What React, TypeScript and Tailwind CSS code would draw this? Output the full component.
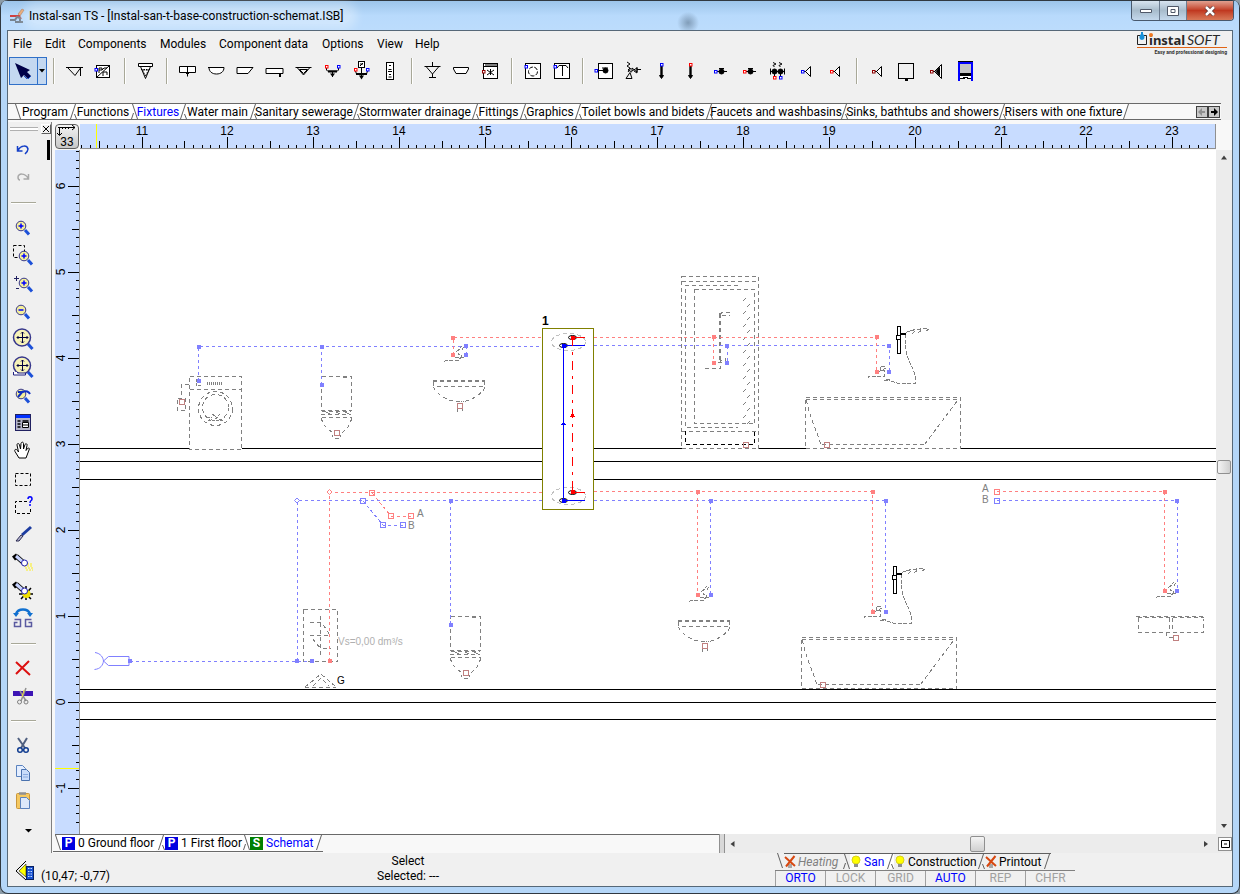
import { useLayoutEffect, useRef, useState } from 'react'
import type { ReactNode } from 'react'

const range = (n: number) => Array.from({ length: n }, (_, i) => i)

/* ---------- small drawing helpers ---------- */

function Port({ x, y, c }: { x: number; y: number; c: string }) {
  return <rect x={x - 1} y={y - 1} width="2.5" height="2.5" fill="#fff" stroke={c} />
}

function ToolIcon({ children }: { children: ReactNode }) {
  return (
    <svg width="29" height="28" viewBox="0 0 29 28" fill="none" stroke="#000" strokeWidth="1" aria-hidden="true">
      {children}
    </svg>
  )
}

type Tool = { name: string; icon: ReactNode } | null

const BLUE = '#0000ff'
const RED = '#ff0000'
const MAROON = '#900000'

const valve = (c: string) => (
  <>
    <path d="M11 14.5H22" />
    <circle cx="16.5" cy="14.5" r="2.5" fill="#000" />
    <path d="M14 11.5h5M16.5 11v3" />
    <Port x={10.5} y={14.5} c={c} />
  </>
)

const outlet = (c: string) => (
  <>
    <path d="M11 14.5h3M18.5 9.5v10l-5-5z" fill="#fff" />
    <Port x={10.5} y={14.5} c={c} />
  </>
)

const arrowDown = (c: string) => (
  <>
    <path d="M14.5 9v11" strokeWidth="2.4" />
    <path d="M12.5 18.5h4l-2 3z" fill="#000" />
    <Port x={14.5} y={7.5} c={c} />
  </>
)

const tools: Tool[] = [
  { name: 'Funnel', icon: <path d="M6 10.5h17M8 11l7 7.5 5.5-7.5M20.5 11v8" /> },
  {
    name: 'Pump',
    icon: (
      <>
        <rect x="7.5" y="8.5" width="13" height="12" fill="#fff" />
        <path d="M8 20L20 9M10 16v-5h3v2h-3M15 11h3M14 19v-4h4v3M13 13l2-2" />
        <Port x={7} y={12.5} c={BLUE} />
      </>
    ),
  },
  null,
  {
    name: 'Floor drain',
    icon: (
      <>
        <path d="M7.5 6.5h14v3h-14zM9.5 9.5l5 12 5-12z" fill="#fff" />
        <path d="M10 12.5h9M14.5 19l-3-6h6z" strokeDasharray="1.5 1" />
      </>
    ),
  },
  null,
  { name: 'Sink', icon: <path d="M6.5 9.5h16v6h-16zM14.5 9.5v10M13 16.5h3" fill="#fff" /> },
  { name: 'Washbasin', icon: <path d="M6 10.5h16M7 10.5c0 4 3 6.5 7.500 6.5s7.500-2.500 7.500-6.5" fill="#fff" /> },
  { name: 'Bathtub', icon: <path d="M6 10.5h16l-5 6h-11z" fill="#fff" /> },
  { name: 'Shower tray', icon: <path d="M6 11.5h17v5h-17zM20.5 16v4M19.5 16v4" fill="#fff" /> },
  { name: 'Urinal', icon: <path d="M6.5 10.5h16M8.5 11l6 7 6-7M10.5 12.5h8l-4 4z" /> },
  {
    name: 'Mixer',
    icon: (
      <>
        <path d="M8.5 11v2l1 1h10l1-1v-2M14.5 14v6" />
        <path d="M10 14.5h9" strokeWidth="2" />
        <path d="M12 16.5h5l-2.500 3.5z" fill="#000" stroke="none" />
        <Port x={8.5} y={9.5} c={RED} />
        <Port x={20.5} y={9.5} c={BLUE} />
      </>
    ),
  },
  {
    name: 'Electronic mixer',
    icon: (
      <>
        <rect x="11.5" y="4.5" width="6" height="6" fill="#fff" />
        <path d="M13 9l3-3M13 7h3M14.5 11v10M8.5 14l1 3h10l1-3" />
        <path d="M9 17h11" strokeWidth="2" />
        <path d="M12 18.5h5l-2.500 4z" fill="#000" stroke="none" />
        <Port x={8.5} y={12.5} c={RED} />
        <Port x={20.5} y={12.5} c={BLUE} />
      </>
    ),
  },
  {
    name: 'Panel',
    icon: (
      <>
        <rect x="10.5" y="5.5" width="7" height="17" fill="#fff" />
        <path d="M13 8.5h2M12.5 12.5h3M12 14.5h4M13 17.5h2M12.5 20h3" />
      </>
    ),
  },
  null,
  { name: 'Drain with vent', icon: <path d="M14.5 5v5M6.5 9.5h16M8.5 10l6 7 6-7M14.5 17v4M11 20.5h7" /> },
  { name: 'Tray', icon: <path d="M6.5 10.5h15v1.5l-2.500 4.5h-10l-2.500-4.5z" fill="#fff" /> },
  {
    name: 'Dishwasher',
    icon: (
      <>
        <rect x="7.5" y="6.5" width="14" height="15" fill="#fff" />
        <path d="M8 9.5h13M10 7v2M12 7v2M14 7v2M16 7v2M18 7v2M20 7v2M11 13l7 5M11 18l7-5M14.5 12v6" />
        <Port x={7.5} y={14.5} c={MAROON} />
      </>
    ),
  },
  null,
  {
    name: 'Washing machine',
    icon: (
      <>
        <rect x="7.5" y="6.5" width="15" height="15" fill="#fff" />
        <circle cx="15" cy="14.5" r="4.5" strokeDasharray="4 1.5" />
        <Port x={8} y={9.5} c={BLUE} />
      </>
    ),
  },
  {
    name: 'Water heater',
    icon: (
      <>
        <rect x="7.5" y="6.5" width="15" height="15" fill="#fff" />
        <path d="M10 11l2-2.500h7l2 2.500M15.500 9v10" />
        <Port x={8} y={9.5} c={BLUE} />
      </>
    ),
  },
  null,
  {
    name: 'Valve box',
    icon: (
      <>
        <rect x="9.5" y="6.5" width="14" height="15" fill="#fff" />
        <path d="M7 13.5h9M13 11h6" />
        <circle cx="16.5" cy="13.5" r="2.5" fill="#000" />
        <Port x={7} y={13.5} c={BLUE} />
      </>
    ),
  },
  {
    name: 'Relief valve',
    icon: <path d="M9 5l3 2-3 2 3 2-2 2 4 2M14 14v-3l5 4v-4l-5 3M8 21.5h6l-2-6zM19 12.5h4M19 10v6l-3-2M13 11l-3 4" />,
  },
  { name: 'Cold water riser', icon: arrowDown(BLUE) },
  { name: 'Hot water riser', icon: arrowDown(RED) },
  { name: 'Cold water valve', icon: valve(BLUE) },
  { name: 'Hot water valve', icon: valve(RED) },
  {
    name: 'Valve set',
    icon: (
      <>
        <path d="M7 14.5h15M7.5 11.5v6M21.5 11.5v6M11.5 10l-1.500-1.500 3-1.500-3-1.500M17.5 10l-1.500-1.500 3-1.500-3-1.500M11.5 14v6M17.5 14v6" />
        <circle cx="11.5" cy="14.5" r="2.5" fill="#000" />
        <circle cx="17.5" cy="14.5" r="2.5" fill="#000" />
        <Port x={11.5} y={20.5} c={RED} />
        <Port x={17.5} y={20.5} c={BLUE} />
      </>
    ),
  },
  { name: 'Cold water outlet', icon: outlet(BLUE) },
  { name: 'Hot water outlet', icon: outlet(RED) },
  null,
  { name: 'Drain inlet', icon: outlet(MAROON) },
  {
    name: 'Inspection chamber',
    icon: (
      <>
        <rect x="6.5" y="6.5" width="15" height="15" />
        <path d="M13 23h3" strokeWidth="2" />
      </>
    ),
  },
  {
    name: 'Aerator',
    icon: (
      <>
        <path d="M11 14.5h3M20.5 7.5v14l-7-7z" fill="#fff" />
        <path d="M18.5 10.5v8l-3.500-4z" fill="#000" />
        <Port x={10.5} y={14.5} c={MAROON} />
      </>
    ),
  },
  {
    name: 'Cabinet',
    icon: (
      <>
        <path d="M8 4h15v18H8z" fill="#000" stroke="none" />
        <path d="M9 24V6h13v18" stroke={BLUE} strokeWidth="2" />
        <path d="M10 7h11v9H10z" fill="#c4c4c4" stroke="none" />
        <path d="M10 19h11v1H10zM10 20h3v1h-3zM15 21h2v1h-2zM18 20h3v1h-3z" fill="#fff" stroke="none" />
      </>
    ),
  },
]

/* ---------- left tool bar ---------- */

function Lens({ children }: { children?: ReactNode }) {
  return (
    <>
      <path d="M17 17l4 4.500" stroke="#1c50d8" strokeWidth="3" />
      <circle cx="13" cy="13" r="4.8" fill="#f4ef9a" stroke="#37378c" />
      {children}
    </>
  )
}

function BigLens() {
  return (
    <>
      <path d="M20 19l4.500 5" stroke="#1c50d8" strokeWidth="3" />
      <circle cx="14" cy="12.5" r="8.5" fill="#f6f2b8" stroke="#37378c" strokeWidth="1.5" />
      <path
        d="M14.5 7v11M9 12.5h11M13 8.5l1.500-1.500 1.500 1.500M13 16.5l1.500 1.500 1.500-1.500M10.5 11l-1.500 1.500 1.500 1.500M18.5 11l1.500 1.500-1.500 1.500"
        stroke="#000040"
      />
    </>
  )
}

function Lamp() {
  return (
    <>
      <path d="M8 7l9 8M6 6l3 4" stroke="#000" strokeWidth="5" />
      <path d="M8 7l8 7" stroke="#c8d4ff" strokeWidth="3" />
      <circle cx="16.5" cy="14" r="3" fill="#fff" stroke="#2020b0" />
    </>
  )
}

const plus = <path d="M10.5 13h5M13 10.5v5" stroke={BLUE} strokeWidth="1.5" />

const sideTools: Tool[] = [
  { name: 'Undo', icon: <path d="M9.5 10v5h5M10 14c3-5 9-5 10-1 0 2-1 3-3 5" stroke="#1540c8" strokeWidth="1.5" /> },
  { name: 'Redo', icon: <path d="M20.5 10v5h-5M20 14c-3-5-10-5-10-1 0 2 1 3 2 3" stroke="#a8a8a8" strokeWidth="1.5" /> },
  null,
  { name: 'Zoom in', icon: <Lens>{plus}</Lens> },
  {
    name: 'Zoom window',
    icon: (
      <>
        <path d="M5.5 4.5h11v12h-11z" stroke="#000" strokeDasharray="3 2" />
        <g transform="translate(3 2)">
          <Lens>{plus}</Lens>
        </g>
      </>
    ),
  },
  {
    name: 'Zoom dynamic',
    icon: (
      <>
        <path d="M6 9.5h5M8.5 7v5M8 19.5h3" stroke="#202060" />
        <g transform="translate(3 1)">
          <Lens>{plus}</Lens>
        </g>
      </>
    ),
  },
  { name: 'Zoom out', icon: <Lens><path d="M10.5 13h5" stroke={BLUE} strokeWidth="1.5" /></Lens> },
  { name: 'Zoom all', icon: <BigLens /> },
  {
    name: 'Zoom page',
    icon: (
      <>
        <BigLens />
        <path d="M5.5 19v3h12v-2h-8v-1" stroke="#202080" fill="#fff" />
      </>
    ),
  },
  { name: 'Previous zoom', icon: <Lens><path d="M10 16l5-6M10 11h5c3-2 6 0 7 2" stroke="#1030c0" strokeWidth="2" /></Lens> },
  {
    name: 'Table',
    icon: (
      <>
        <rect x="7.5" y="5.5" width="15" height="16" fill="#b4b4c8" stroke="#202060" />
        <path d="M8 7.5h14" stroke="#0030ff" strokeWidth="3" />
        <path d="M9.5 12h3M9.5 15h3M9.5 18h3M14.5 12h6" stroke="#000" strokeWidth="1.5" />
        <path d="M14.5 13.5h6v5h-6zM14.5 16h6" stroke="#000" fill="#fff" />
      </>
    ),
  },
  {
    name: 'Pan',
    icon: (
      <path
        d="M11 21l-4-6.500c-1-2 1-3 2.500-1l1 1.500-1.500-7c0-2 2-2 2.500 0l1 4 .5-5.500c.5-2 2.500-1.500 2.500 0v5.500l1.500-4.500c1-1.500 2.500-.5 2 1l-1 5 1.500-2c1.500-1 2.500 0 1.500 1.500l-3 8z"
        fill="#fff"
        stroke="#000"
      />
    ),
  },
  { name: 'Select area', icon: <path d="M7.5 8.5h15v12h-15z" stroke="#000" strokeDasharray="3 2" /> },
  {
    name: 'Select by type',
    icon: (
      <>
        <path d="M19 8.5H7.5v12h15v-6" stroke="#000" strokeDasharray="3 2" />
        <path d="M20 6c0-3 4-3 4 0 0 2-2 1-2 4M22 11v2" stroke={BLUE} strokeWidth="1.5" />
      </>
    ),
  },
  {
    name: 'Knife',
    icon: (
      <>
        <path d="M14 14l9-8" stroke="#1c3ca0" strokeWidth="3" />
        <path d="M8 20l5-6 2 1-4 5z" fill="#b4b4d0" stroke="#282850" />
      </>
    ),
  },
  {
    name: 'Highlight',
    icon: (
      <>
        <path d="M16 17h9M17 19h8M18 21h7M19 15h6" stroke="#f8f060" strokeWidth="1.5" strokeDasharray="2 1" />
        <Lamp />
      </>
    ),
  },
  {
    name: 'Highlight selected',
    icon: (
      <>
        <path d="M18 9v14M11 17h14M13 12l10 10M13 22l10-11" stroke="#000" strokeWidth="1.5" />
        <circle cx="18.5" cy="17" r="4" fill="#f0e000" />
        <Lamp />
      </>
    ),
  },
  {
    name: 'Mirror',
    icon: (
      <>
        <path d="M8 9c2-6 12-6 14 0" stroke="#1070d0" strokeWidth="2.5" />
        <path d="M5 8h6l-3 4zM19 8h6l-3 4z" fill="#1070d0" />
        <path d="M6.5 14.5h6v7h-6v-4h3M23.5 14.5h-6v7h6v-4h-3" stroke="#5a5aa0" strokeWidth="1.5" />
      </>
    ),
  },
  null,
  { name: 'Delete', icon: <path d="M8 8l14 13M21 7L8 20" stroke="#dc1010" strokeWidth="2" /> },
  {
    name: 'Cut pipe',
    icon: (
      <>
        <path d="M5 11.5h20" stroke="#3c14b4" strokeWidth="5" />
        <path d="M18 6l-5 13M12 9l6 10" stroke="#909090" strokeWidth="1.5" />
        <path d="M16 8l-2 7" stroke="#f0e040" />
        <circle cx="11.5" cy="20" r="2" stroke="#808080" />
        <circle cx="18" cy="20" r="2" stroke="#808080" />
      </>
    ),
  },
  null,
  {
    name: 'Cut',
    icon: (
      <>
        <path d="M10 7l7 10M19 7l-6 10" stroke="#506080" strokeWidth="2" />
        <circle cx="12" cy="19" r="2.3" stroke="#103c90" strokeWidth="1.5" />
        <circle cx="18" cy="19" r="2.3" stroke="#103c90" strokeWidth="1.5" />
      </>
    ),
  },
  {
    name: 'Copy',
    icon: (
      <>
        <path d="M8.5 6.5h6l3 3v8h-9z" fill="#e4eeff" stroke="#5a82be" />
        <path d="M13.5 10.5h5l3 3v8h-8z" fill="#c8dcfa" stroke="#4a72ae" />
        <path d="M15 15.5h5M15 18h5" stroke="#8aaade" />
      </>
    ),
  },
  {
    name: 'Paste',
    icon: (
      <>
        <rect x="8.5" y="6.5" width="13" height="15" rx="1" fill="#f5c860" stroke="#c8963c" />
        <path d="M11 6.5h7" stroke="#909090" strokeWidth="2.5" />
        <path d="M12.5 10.5h6l3 3v8h-9z" fill="#dce8fa" stroke="#5a82be" />
      </>
    ),
  },
  { name: 'More', icon: <path d="M17 14h7l-3.500 3.500z" fill="#000" /> },
]

/* ---------- tab strips ---------- */

/* the slanted edge between two tabs; "back" is used left of the active one */
function Edge({ kind }: { kind: 'slash' | 'back' | 'first' | 'last' }) {
  const d = {
    slash: 'M2.5 15L7.5 0M6.5 10l2 5',
    back: 'M3.5 0l5 15M2.5 15l2-6',
    first: 'M2.5 0l5 15',
    last: 'M2.5 15L7.5 0',
  }[kind]
  const fill = { slash: 'M0 0h9v15H0z', back: 'M0 0h9v15H0z', first: 'M3 0h6v15H8z', last: 'M0 0h7L2 15H0z' }[kind]
  return (
    <svg className="shrink-0" width="9" height="15" viewBox="0 0 9 15" fill="none" aria-hidden="true">
      <path d={fill} fill="currentColor" />
      <path d={d} stroke="#606060" />
    </svg>
  )
}

const groups = [
  { name: 'Program', w: 'w-[46px]' },
  { name: 'Functions', w: 'w-[52px]' },
  { name: 'Fixtures', w: 'w-[40px]' },
  { name: 'Water main', w: 'w-[61px]' },
  { name: 'Sanitary sewerage', w: 'w-[94px]' },
  { name: 'Stormwater drainage', w: 'w-[110px]' },
  { name: 'Fittings', w: 'w-[39px]' },
  { name: 'Graphics', w: 'w-[46px]' },
  { name: 'Toilet bowls and bidets', w: 'w-[122px]' },
  { name: 'Faucets and washbasins', w: 'w-[126px]' },
  { name: 'Sinks, bathtubs and showers', w: 'w-[149px]' },
  { name: 'Risers with one fixture', w: 'w-[115px]' },
]

const menu = [
  { name: 'File', w: 'w-[19px]' },
  { name: 'Edit', w: 'w-[20px]' },
  { name: 'Components', w: 'w-[69px]' },
  { name: 'Modules', w: 'w-[46px]' },
  { name: 'Component data', w: 'w-[90px]' },
  { name: 'Options', w: 'w-[42px]' },
  { name: 'View', w: 'w-[25px]' },
  { name: 'Help', w: 'w-[25px]' },
]

/* ---------- rulers ---------- */

/* size of the element, so that a ruler only draws what fits */
function useSize() {
  const ref = useRef<HTMLDivElement>(null)
  const [size, setSize] = useState({ w: 0, h: 0 })
  useLayoutEffect(() => {
    const el = ref.current
    if (!el) return
    const update = () => setSize({ w: el.clientWidth, h: el.clientHeight })
    update()
    const ro = new ResizeObserver(update)
    ro.observe(el)
    return () => ro.disconnect()
  }, [])
  return [ref, size] as const
}

const tick = (t: number) => (t % 10 === 0 ? 11 : t % 5 === 0 ? 7 : 3)
const fit = (length: number, step: number) => Math.max(0, Math.floor(length / step))

function TopRuler() {
  const [ref, { w }] = useSize()
  return (
    <div ref={ref} className="h-full overflow-hidden">
      <svg className="block h-full w-full" fontFamily="Liberation Sans, sans-serif" fontSize="12" shapeRendering="crispEdges">
        {range(fit(w, 8.59)).map((i) => (
          <rect key={i} x={Math.floor(62 + (i - 7) * 8.59)} y={24 - tick(i - 7)} width="1" height={tick(i - 7)} />
        ))}
        {range(fit(w + 15, 85.9)).map((i) => (
          <text key={i} x={Math.floor(62 + i * 85.9)} y="11" textAnchor="middle">
            {11 + i}
          </text>
        ))}
        <rect x="16" width="1" height="25" fill="#ffff00" />
      </svg>
    </div>
  )
}

function SideRuler() {
  const [ref, { h }] = useSize()
  return (
    <div ref={ref} className="h-full overflow-hidden">
      <svg className="block h-full w-full" fontFamily="Liberation Sans, sans-serif" fontSize="12" shapeRendering="crispEdges">
        {range(fit(h, 8.6)).map((i) => (
          <rect key={i} x={24 - tick(i - 4)} y={Math.floor(36 + (i - 4) * 8.6)} width={tick(i - 4)} height="1" />
        ))}
        {range(fit(h + 40, 86)).map((i) => (
          <text key={i} transform={`translate(10 ${36 + i * 86}) rotate(-90)`} textAnchor="middle">
            {6 - i}
          </text>
        ))}
        <rect y="618" width="25" height="1" fill="#ffff00" />
      </svg>
    </div>
  )
}

/* ---------- drawing ---------- */

const COLD = '#8080ff'
const HOT = '#ff8080'
const GRAY = '#808080'

function Dot({ x, y, c }: { x: number; y: number; c: string }) {
  return <rect x={x - 2} y={y - 2} width="4" height="4" fill={c} stroke="none" />
}

function Node({ x, y, c = '#c08080' }: { x: number; y: number; c?: string }) {
  return <rect x={x - 2.5} y={y - 2.5} width="5" height="5" fill="none" stroke={c} strokeDasharray="none" />
}

function Toilet({ dx = 0, dy = 0 }) {
  return (
    <g transform={`translate(${dx} ${dy})`}>
      <path d="M321.5 376.5h30v34h-30z" />
      <path d="M343 377.5h7M322 411.5h29M321 414.5h30M322 417.5h30M326 412l4 2M336 412l4 2M345 412l4 2" />
      <path d="M321.5 418c1 8 6 10 10 14l1 5M351.5 418c-1 8-6 12-10 15l-1 4M335 438.5h6" />
      <Node x={337} y={432.5} />
    </g>
  )
}

function Basin({ dx = 0, dy = 0 }) {
  return (
    <g transform={`translate(${dx} ${dy})`}>
      <path d="M433 381h52" strokeWidth="2" />
      <path d="M433.5 382v4h51v-4M433.5 387c4 9 16 14 24 15M485 387c-4 9-16 14-24 15" />
      <path d="M456 401.5h8M457.5 408v3.500h2M462.5 408v3" />
      <Node x={460} y={406} />
    </g>
  )
}

function Faucet({ dx = 0, dy = 0 }) {
  return (
    <g transform={`translate(${dx} ${dy})`}>
      <path d="M444 361.500l2-1h12l3-3v-3h-3v-5l4 0 3-4M456 352l6-6M455 357h9" strokeDasharray="4 1.5" />
    </g>
  )
}

function Bath({ dx = 0, dy = 0 }) {
  return (
    <g transform={`translate(${dx} ${dy})`}>
      <path d="M805.5 397.5h155v51h-155z" fill="#fff" />
      <path d="M806 399.5h154M806.5 400c3 18 9 26 14 44M822 444.5h103M925 444l33-44" />
      <Node x={827} y={445} />
    </g>
  )
}

function HandShower({ dx = 0, dy = 0 }) {
  return (
    <g transform={`translate(${dx} ${dy})`}>
      <path d="M905.5 334c-1 16 2 24 5 30 4 7 5 12 5 19-8 2-20 1-26-3l-4-1" strokeDasharray="4 1.5" />
      <path d="M906 332.500l8-3h5l3-1h7M912 334l4-4M918 333l5-4M926 331l3-2M910 330h4" strokeDasharray="4 2" />
      <path d="M868 378v-2h16v-6h-4v-4h6M878 372l8-4M884 380h6" strokeDasharray="4 1.5" />
      <g stroke="#000" fill="#fff" strokeDasharray="none">
        <path d="M897.5 326.5h3v27h-3z" />
        <path d="M896.5 335.5h4v4h-4z" />
        <path d="M900 333.5h6" strokeWidth="2" />
      </g>
    </g>
  )
}

function Drawing() {
  return (
    <svg
      className="block h-full w-full"
      fill="none"
      shapeRendering="crispEdges"
      fontFamily="Liberation Sans, sans-serif"
      fontSize="10"
      role="img"
      aria-label="Water supply schematic"
    >
      {/* origin of the sheet */}
      <g transform="translate(-80 -150)">
        <g stroke="#000">
          <path d="M80 448.5h4000M80 461.5h4000M80 479.5h4000" />
          <path d="M80 689.5h4000M80 702.5h4000M80 719.5h4000" />
        </g>

        <g stroke={GRAY} strokeDasharray="4 3">
          {/* washing machine */}
          <path d="M189.5 376.5h52v73h-52z" fill="#fff" />
          <path d="M190 389.5h51M189 384.5h-8v12M177.5 398.5h8v12h-8z" />
          <circle cx="215.5" cy="408.5" r="17" />
          <circle cx="215.5" cy="407.5" r="13" />
          <path d="M207 383.500h15" strokeWidth="3" strokeDasharray="1 1" />
          <path d="M207 417h5l-3 3h14M212 414l8 6M220 414l-6 7M196 379v6h6" strokeDasharray="3 1" />
          <Node x={182} y={402} />

          <Toilet />
          <Toilet dx={129} dy={240} />
          <Basin />
          <Basin dx={245} dy={240} />

          {/* shower cabin */}
          <path d="M681.5 276.5h77v172h-77z" fill="#fff" />
          <path d="M682 281.5h76M738 285.5h-52.500v142h52.500M694.5 289.5h60v134h-60zM682 431.5h76" />
          {range(10).map((i) => (
            <path
              key={i}
              d={`M743 ${301 + i * 13}l3-3M747 ${307 + i * 13}l3-3`}
              strokeDasharray="none"
              shapeRendering="auto"
            />
          ))}
          <path d="M719.5 360v-47M720.5 360v-46M719 314l5-2 9 0M722 316l8-1M705 368.5h15v-8h5v-3M718 362h8" />
          <path d="M685.5 431v13.500h69v-13" stroke="#000" />
          <Node x={746} y={445} />

          <Bath />
          <Bath dx={-4} dy={240} />

          {/* heater with drain */}
          <path d="M303.5 609.5h34v52h-34z" />
          <path d="M320.5 616v40M310 635.5h21M310 622.5h10c4 3 7 7 9 11M313 639c3 5 6 8 9 9h9" />
          <path d="M305 687.5h31M305 687l16-13 15 13M313 686l8-8 8 8" />

          {/* sink on the right */}
          <path d="M1136 616.5h68M1138 617.5h66M1138.5 618v14.500h65v-14M1169.5 618v14M1172.5 618v14M1166.5 632v5h6" />
          <Node x={1175.5} y={638} />
        </g>

        {/* pipes */}
        <g stroke={COLD} strokeDasharray="3 3">
          <path d="M198.5 381v-34.500H543M321.5 385v-38M466.5 346v9" />
          <path d="M594 345.5h295.500v26M727.5 346v17" />
          <path d="M130 661.5h182M297.5 661V500.5H543M450.5 501v124" />
          <path d="M363 501l20 24h20" />
          <path d="M594 500.5h291.500v112M710.5 501v94" />
          <path d="M997 500.5h180v90" />
        </g>
        <g stroke={HOT} strokeDasharray="3 3">
          <path d="M453.5 355v-17.500H543" />
          <path d="M594 337.5h282.500v35M713.5 338v25" />
          <path d="M329.5 661V492.5H543M372 493l19 23h20" />
          <path d="M594 491.5h278.500v120M697.5 492v103" />
          <path d="M997 491.5h167.500v99" />
        </g>
        <g stroke={COLD} shapeRendering="auto">
          <path d="M95 652.500c6 1 8 5 8.500 8.500-.5 4-3 8-9 8.500M103.500 661l5-4.500h20.500v9h-20.500z" />
          <path d="M297 498l2.500 2.500-2.500 2.500-2.500-2.500z" fill="#fff" />
          <path d="M329.500 489.500l2.500 2.500-2.500 2.500-2.500-2.500z" stroke={HOT} fill="#fff" />
        </g>

        <g stroke={GRAY}>
          <Faucet />
          <Faucet dx={245} dy={240} />
          <Faucet dx={712} dy={236} />
          <HandShower />
          <HandShower dx={-4} dy={240} />
        </g>

        {[
          [199, 347], [199, 381], [322, 347], [322, 385], [466, 346], [466, 355], [727, 346], [727, 363],
          [889, 346], [889, 372], [297, 661], [312, 661], [451, 501], [451, 625], [711, 501], [711, 595],
          [886, 501], [886, 612], [1177, 501], [1177, 591], [130, 661],
        ].map(([x, y]) => (
          <Dot key={`${x}-${y}`} x={x} y={y} c={COLD} />
        ))}
        {[
          [453, 338], [453, 355], [714, 337], [714, 363], [877, 337], [877, 372], [330, 661], [698, 492],
          [698, 595], [873, 492], [873, 612], [1165, 492], [1165, 591],
        ].map(([x, y]) => (
          <Dot key={`${x}-${y}`} x={x} y={y} c={HOT} />
        ))}
        <Node x={372} y={492.5} c={HOT} />
        <Node x={391} y={516} c={HOT} />
        <Node x={411} y={516} c={HOT} />
        <Node x={363} y={501} c={COLD} />
        <Node x={383} y={525} c={COLD} />
        <Node x={403} y={525} c={COLD} />
        <Node x={997} y={492} c={HOT} />
        <Node x={997} y={500.5} c={COLD} />

        {/* selected riser */}
        <rect x="542.5" y="328.5" width="51" height="181" fill="#fff" stroke="#808000" />
        <g stroke="#c0c0c0" strokeDasharray="4 3">
          <ellipse cx="568.5" cy="342" rx="17" ry="8.5" />
          <ellipse cx="568.5" cy="496" rx="17" ry="8.5" />
        </g>
        <g stroke="#000" shapeRendering="auto">
          <ellipse cx="572.5" cy="337.5" rx="4" ry="2" />
          <ellipse cx="563.5" cy="345.5" rx="4" ry="2" />
          <ellipse cx="572.5" cy="492.5" rx="4" ry="2" />
          <ellipse cx="563.5" cy="500.5" rx="4" ry="2" />
        </g>
        <path d="M585 345.5h-21.500v155h21.500" stroke={BLUE} />
        <path d="M585 337.5h-12.500v8M585 492.5h-12.500v-12" stroke={RED} />
        <path d="M572.5 352v135" stroke={RED} strokeDasharray="3 6 9 6" />
        <path d="M570 417h5l-2.500-5z" fill={RED} />
        <path d="M561 425h5l-2.500-4z" fill={BLUE} />
        <Dot x={573} y={338} c={RED} />
        <Dot x={573} y={492} c={RED} />
        <Dot x={564} y={346} c={BLUE} />
        <Dot x={564} y={501} c={BLUE} />

        <text x="542" y="325" fontSize="12" fontWeight="bold" fill="#000">1</text>
        <g fill={GRAY}>
          <text x="417" y="517">A</text>
          <text x="408" y="529">B</text>
          <text x="982" y="492">A</text>
          <text x="982" y="503">B</text>
        </g>
        <text x="338" y="645" fill="#b0b0b0">Vs=0,00 dm³/s</text>
        <text x="337" y="684" fill="#000">G</text>
      </g>
    </svg>
  )
}

/* ---------- window parts ---------- */

function Arrow({ dir }: { dir: 'up' | 'down' | 'left' | 'right' }) {
  const d = { up: 'M1 5.5h6l-3-4z', down: 'M1 2h6l-3 4z', left: 'M5.5 1v6l-4-3z', right: 'M2 1v6l4-3z' }[dir]
  return (
    <svg width="8" height="8" viewBox="0 0 8 8" aria-hidden="true">
      <path d={d} fill="#404040" />
    </svg>
  )
}

function Logo() {
  return (
    <svg className="shrink-0" width="92" height="24" viewBox="0 0 92 24" role="img" aria-label="instalSOFT">
      <path d="M3 3.5H.5v9h9v-9H7" fill="none" stroke="#202020" />
      <path d="M4 0h2v2c3 3 1 6-1 6s-4-3-1-6z" fill="#1890d8" />
      <text x="12" y="13" fontFamily="Noto Sans, sans-serif" fontWeight="bold" fontSize="13" fill="#282828">instal</text>
      <circle cx="14" cy="3" r="2" fill="#f07820" />
      <text x="50" y="13" fontFamily="Lato, sans-serif" fontStyle="italic" fontSize="14" fill="#282828">SOFT</text>
      <path d="M0 15.5h90" stroke="#e06414" />
      <text x="90" y="22" textAnchor="end" fontFamily="Roboto, sans-serif" fontWeight="bold" fontSize="5" fill="#303030">
        Easy and professional designing
      </text>
    </svg>
  )
}

function Bulb({ on }: { on: boolean }) {
  return (
    <svg className="shrink-0" width="12" height="14" viewBox="0 0 12 14" aria-hidden="true">
      {on ? (
        <>
          <circle cx="6" cy="5" r="4" fill="#ffff00" stroke="#d8d020" />
          <path d="M4 9h4v3H4z" fill="#909090" />
        </>
      ) : (
        <>
          <path d="M4 9h4v4H4z" fill="#a8a8a8" />
          <path d="M1 2l10 9M10.5 1L2 11.5" stroke="#d84810" strokeWidth="2" />
        </>
      )}
    </svg>
  )
}

const sheets = [
  { badge: 'P', name: '0 Ground floor', w: 'w-[78px]', active: false },
  { badge: 'P', name: '1 First floor', w: 'w-[60px]', active: false },
  { badge: 'S', name: 'Schemat', w: 'w-[48px]', active: true },
]

const modules = [
  { name: 'Heating', w: 'w-[43px]', on: false, edge: 'back' },
  { name: 'San', w: 'w-[21px]', on: true, edge: 'slash' },
  { name: 'Construction', w: 'w-[68px]', on: true, edge: 'slash' },
  { name: 'Printout', w: 'w-[43px]', on: false, edge: 'last' },
] as const

const modes = ['ORTO', 'LOCK', 'GRID', 'AUTO', 'REP', 'CHFR']

function TitleBar() {
  return (
    <header className="flex h-[30px] shrink-0 items-start justify-between border-t border-[#303840] bg-[radial-gradient(circle_11px_at_55.5%_75%,rgba(90,115,140,0.6),transparent),linear-gradient(to_bottom,#9cc4ea,#b8dafc_50%,#bcdcfc)] pl-2">
      <div className="flex h-7 items-center gap-1 pt-0.5">
        <svg width="16" height="16" viewBox="0 0 16 16" aria-hidden="true">
          <path d="M9 6l4-5 2 1-4 6z" fill="#e8a878" stroke="#a06840" strokeWidth=".5" />
          <path d="M1 8h9l2 3" fill="none" stroke="#d04040" strokeWidth="2" />
          <path d="M1 12h5l2-3 3 1v5M6 14h8" fill="none" stroke="#788490" strokeWidth="2" />
        </svg>
        <h1 className="rounded-full bg-white/30 pr-2 text-xs leading-4 whitespace-nowrap text-black shadow-[0_0_10px_6px_rgba(255,255,255,0.3)]">
          Instal-san TS - [Instal-san-t-base-construction-schemat.ISB]
        </h1>
      </div>
      <div className="mr-[5px] flex h-5 overflow-hidden rounded-b border border-t-0 border-[#48586c]">
        <button type="button" aria-label="Minimize" className="flex w-[28px] items-center justify-center border-r border-[#6c7c90] bg-linear-to-b from-[#d8e4f0] via-[#a8bccc] to-[#c4d8ec]">
          <svg width="12" height="6" viewBox="0 0 12 6"><path d="M.5 1.500h11v3H.5z" fill="#fff" stroke="#505868" /></svg>
        </button>
        <button type="button" aria-label="Maximize" className="flex w-[27px] items-center justify-center border-r border-[#6c7c90] bg-linear-to-b from-[#d8e4f0] via-[#a8bccc] to-[#c4d8ec]">
          <svg width="12" height="10" viewBox="0 0 12 10"><path d="M.5.5h11v9H.5zM4 3.500h4v3H4z" fill="#fff" stroke="#505868" /></svg>
        </button>
        <button type="button" aria-label="Close" className="flex w-[46px] items-center justify-center bg-linear-to-b from-[#e0a090] via-[#c03820] to-[#d87858]">
          <svg width="12" height="10" viewBox="0 0 12 10">
            <path d="M2 1l8 8M10 1L2 9" stroke="#583030" strokeWidth="4" />
            <path d="M2 1l8 8M10 1L2 9" stroke="#fff" strokeWidth="2.5" />
          </svg>
        </button>
      </div>
    </header>
  )
}

function Separator() {
  return (
    <div className="flex h-7 w-[13px] shrink-0 items-center justify-center">
      <div className="h-[26px] w-0.5 border-l border-[#a8a898] bg-white" />
    </div>
  )
}

export default function App() {
  return (
    <div className="h-screen bg-[#8c9ca8] font-[Roboto,'Liberation_Sans',sans-serif] text-xs leading-4 text-black">
      <div className="flex h-full flex-col overflow-hidden rounded-lg border border-t-0 border-[#303840] bg-[#b4d6f8] select-none">
        <TitleBar />

        <div className="mx-1.5 mb-1.5 flex min-h-0 flex-1 flex-col border border-[#566878] bg-[#f0f0f0]">
          {/* menu */}
          <div className="flex h-[25px] shrink-0 items-center justify-between pr-[3px]">
            <nav className="flex gap-[13px] pl-[5px]">
              {menu.map((m) => (
                <button key={m.name} type="button" className={`${m.w} text-left whitespace-nowrap`}>
                  {m.name}
                </button>
              ))}
            </nav>
            <Logo />
          </div>

          {/* component tool bar */}
          <div className="flex h-[47px] shrink-0 items-start pt-px pl-px" role="toolbar">
            <div className="flex h-7 w-[38px] border border-[#3070c8] bg-[#c4d8f0]">
              <button type="button" aria-label="Select" className="flex flex-1 items-center justify-center">
                <svg width="20" height="20" viewBox="0 0 20 20">
                  <path d="M1 2l15 7-3 2 4 4-3 3-4-4-3 3z" fill="#000048" />
                  <path d="M14 18l3-3M10 15l3 3" stroke="#1c50c8" />
                </svg>
              </button>
              <button type="button" aria-label="Select options" className="flex w-[9px] items-center justify-center border-l border-[#3070c8]">
                <svg width="6" height="4" viewBox="0 0 6 4"><path d="M0 0h6L3 3.500z" /></svg>
              </button>
            </div>
            <Separator />
            {tools.map((t, i) =>
              t ? (
                <button key={t.name} type="button" aria-label={t.name}>
                  <ToolIcon>{t.icon}</ToolIcon>
                </button>
              ) : (
                <Separator key={i} />
              ),
            )}
          </div>

          {/* component groups */}
          <div className="mr-[11px] flex h-[17px] shrink-0 items-center justify-between border-y border-[#696969] bg-[#f8f8f8] pr-px">
            <div className="flex pl-[5px] text-white">
              <Edge kind="first" />
              {groups.map((g, i) => (
                <div key={g.name} className="flex">
                  <button
                    type="button"
                    className={`${g.w} ${g.name === 'Fixtures' ? 'text-[#0000ff]' : 'text-black'} relative z-10 flex h-[15px] items-center justify-center bg-white whitespace-nowrap`}
                  >
                    {g.name}
                  </button>
                  <Edge kind={i === 1 ? 'back' : i === groups.length - 1 ? 'last' : 'slash'} />
                </div>
              ))}
            </div>
            <div className="flex">
              <button type="button" aria-label="Scroll left" className="flex size-3 items-center justify-center border border-[#404040] bg-[#c8c8c8]">
                <svg width="8" height="8" viewBox="0 0 8 8"><path d="M0 4l4-4v3h3v2H4v3z" fill="#909090" /></svg>
              </button>
              <button type="button" aria-label="Scroll right" className="flex size-3 items-center justify-center border border-[#404040] bg-[#c8c8c8]">
                <svg width="8" height="8" viewBox="0 0 8 8"><path d="M8 4L4 0v3H1v2h3v3z" /></svg>
              </button>
            </div>
          </div>

          <div className="flex min-h-0 flex-1 bg-[#f8f8f8] pt-0.5">
            {/* view and edit tool bar */}
            <aside className="flex w-[44px] shrink-0 flex-col overflow-hidden border-r border-[#808080] bg-[#f0f0f0]">
              <div className="flex h-3.5 shrink-0 items-center gap-[3px] pl-0.5">
                <div className="h-1 w-[28px] border-y border-[#b0b0b0] bg-white" />
                <button type="button" aria-label="Close tool bar" className="flex size-2.5 items-center justify-center border border-white border-r-[#606060] border-b-[#606060]">
                  <svg width="6" height="6" viewBox="0 0 6 6"><path d="M0 0l6 6M6 0L0 6" stroke="#000" /></svg>
                </button>
              </div>
              <div className="flex">
                <div className="flex w-[30px] flex-col">
                  {sideTools.map((t, i) =>
                    t ? (
                      <button key={t.name} type="button" aria-label={t.name} className="h-7">
                        <svg width="30" height="28" viewBox="0 0 30 28" fill="none" aria-hidden="true">
                          {t.icon}
                        </svg>
                      </button>
                    ) : (
                      <div key={i} className="flex h-[21px] items-center pl-[3px]">
                        <div className="h-0.5 w-[25px] border-t border-[#a8a898] bg-white" />
                      </div>
                    ),
                  )}
                </div>
                <div className="mt-1 ml-[9px] h-5 w-[3px] bg-black" />
              </div>
            </aside>

            <div className="flex min-w-0 flex-1 flex-col pl-[3px]">
              <div className="flex h-7 shrink-0 pt-0.5">
                <button type="button" className="flex h-[25px] w-6 shrink-0 flex-col items-center justify-end rounded-sm border border-[#606060] bg-linear-to-b from-[#f4f4f4] to-[#c8c8c8] leading-none">
                  <svg className="shrink-0" width="20" height="11" viewBox="0 0 20 11" fill="none" stroke="#000" aria-hidden="true">
                    <path d="M1 2.500h17M15 0l3 2.500-3 2.500M2.500 2v8M0 8l2.500 2.500L5 8M5.500 2v2M8.500 2v2M11.500 2v2" />
                  </svg>
                  33
                </button>
                <div className="ml-px h-[25px] min-w-0 flex-1 border-r border-b border-[#909090] bg-[#c8dcff]">
                  <TopRuler />
                </div>
                <div className="w-4 shrink-0" />
              </div>

              <div className="flex min-h-0 flex-1">
                <div className="w-[25px] shrink-0 overflow-hidden border-r border-[#909090] bg-[#c8dcff]">
                  <SideRuler />
                </div>
                <main className="min-w-0 flex-1 overflow-hidden bg-white">
                  <Drawing />
                </main>
                <div className="flex w-4 shrink-0 flex-col items-center bg-[#ececec] py-1">
                  <button type="button" aria-label="Scroll up"><Arrow dir="up" /></button>
                  <div className="flex-6" />
                  <div className="size-3.5 rounded-xs border border-[#909090] bg-linear-to-r from-[#f4f4f4] to-[#d0d0d0]" />
                  <div className="flex-7" />
                  <button type="button" aria-label="Scroll down"><Arrow dir="down" /></button>
                </div>
              </div>

              {/* sheets and horizontal scroll bar */}
              <div className="flex h-[19px] shrink-0 items-stretch">
                <div className="flex flex-1 items-start bg-[#f8f8f8]">
                  <div className="flex w-full border-t border-[#696969]">
                    <div className="-ml-0.5 flex border-b border-[#696969] text-white">
                      <Edge kind="first" />
                      {sheets.map((s, i) => (
                        <div key={s.name} className="flex">
                          <button type="button" className={`${s.active ? 'text-[#0000ff]' : 'text-black'} relative z-10 flex items-center gap-[3px] bg-white`}>
                            <span className={`${s.active ? 'bg-[#008000]' : 'bg-[#0000e0]'} flex size-[13px] items-center justify-center font-bold text-white`}>
                              {s.badge}
                            </span>
                            <span className={`${s.w} text-left whitespace-nowrap`}>{s.name}</span>
                          </button>
                          <Edge kind={i === 1 ? 'back' : i === 2 ? 'last' : 'slash'} />
                        </div>
                      ))}
                    </div>
                  </div>
                </div>
                <div className="flex w-[513px] shrink-0 items-center bg-[#ececec]">
                  <div className="h-full w-1.5 border-x border-[#909090] bg-[#d8d8d8]" />
                  <button type="button" aria-label="Scroll left" className="px-1"><Arrow dir="left" /></button>
                  <div className="flex flex-1 justify-center pl-4">
                    <div className="h-4 w-[15px] rounded-xs border border-[#909090] bg-linear-to-b from-[#f4f4f4] to-[#d0d0d0]" />
                  </div>
                  <button type="button" aria-label="Scroll right" className="px-1"><Arrow dir="right" /></button>
                  <button type="button" aria-label="Fit sheet" className="ml-1 flex size-3.5 items-center justify-center border border-[#909090] bg-white">
                    <svg width="9" height="8" viewBox="0 0 9 8" fill="none" stroke="#000"><path d="M.5.5h8v7h-8zM3 4h3" /></svg>
                  </button>
                </div>
              </div>
            </div>
          </div>

          {/* status bar */}
          <footer className="flex h-[33px] shrink-0">
            <div className="flex w-[300px] items-end gap-1.5 pb-1 pl-[7px]">
              <svg width="20" height="22" viewBox="0 0 20 22" aria-hidden="true">
                <path d="M11 1L1 11l10 9" fill="none" stroke="#000" />
                <path d="M11 4v13l-7-6z" fill="#ffff00" stroke="#000" strokeWidth=".5" />
                <rect x="11.5" y="6.5" width="7" height="13" fill="#1850d0" stroke="#082060" />
                <path d="M13 8.500h4M13 11.500h4M13 14h4M13 16.500h4" stroke="#c8e0ff" strokeDasharray="1 .5" />
              </svg>
              <span className="-mb-0.5">(10,47; -0,77)</span>
            </div>
            <div className="flex w-[200px] flex-col items-center">
              <span className="leading-4">Select</span>
              <span className="leading-[15px]">Selected: ---</span>
            </div>
            <div className="mr-[157px] ml-auto">
              <div className="flex border-b border-[#808080]">
                <div className="flex text-[#f0f0f0]">
                  <Edge kind="first" />
                  {modules.map((m) => (
                    <div key={m.name} className={`${m.name === 'San' ? 'text-white' : 'text-[#f0f0f0]'} flex border-t border-[#606060]`}>
                      <button
                        type="button"
                        className={`${m.name === 'San' ? 'bg-white text-[#0000ff]' : m.name === 'Heating' ? 'text-[#808080] italic' : 'text-black'} relative z-10 flex h-4 items-center gap-0.5`}
                      >
                        <Bulb on={m.on} />
                        <span className={`${m.w} text-left whitespace-nowrap`}>{m.name}</span>
                      </button>
                      <Edge kind={m.edge} />
                    </div>
                  ))}
                </div>
              </div>
              <div className="flex">
                {modes.map((m) => (
                  <button
                    key={m}
                    type="button"
                    className={`${m === 'ORTO' || m === 'AUTO' ? 'text-[#0000ff]' : 'text-[#a0a0a0]'} h-[15px] w-[50px] border-l border-[#a0a0a0] leading-[15px]`}
                  >
                    {m}
                  </button>
                ))}
              </div>
            </div>
          </footer>
        </div>
      </div>
    </div>
  )
}
